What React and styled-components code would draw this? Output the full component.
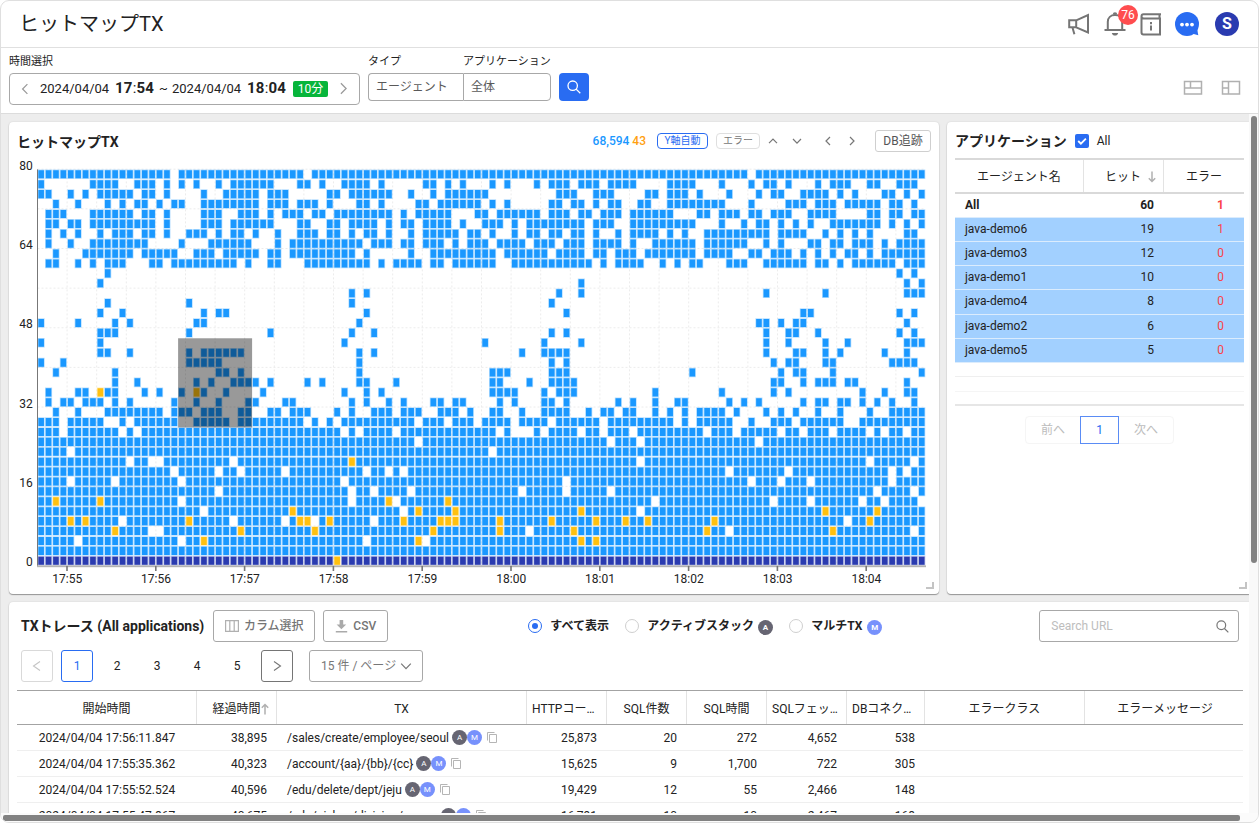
import React from "react";
import styled, { createGlobalStyle, css } from "styled-components";

const GlobalStyle = createGlobalStyle`
  * { box-sizing: border-box; }
  body {
    margin: 0;
    background: #fff;
    color: #222;
    font-family: Roboto, "Noto Sans CJK JP", sans-serif;
    font-size: 12px;
    line-height: 1;
    overflow: hidden;
  }
  button { font: inherit; color: inherit; padding: 0; }
`;

/* ---------- heatmap data ---------- */

const COLS = 120;
const ROWS = 40;

/* Filled columns per row, top (80s) to bottom */
const filled = [
  "0-17,19-35,37-95,97-119",
  "0,7-10,13-15,17,19,21,24,26-31,35-36,38,41-44,46,52-53,55,57,61,63,67,69-71,73-75,77-80,85-88,92,96,98-99,101,105,107-109,112-113,116-118",
  "0-1,4,6,8-12,14-15,17,22,25-29,31-33,39-40,42-47,50,53,55-60,70-72,75-77,82-83,85-87,89,93,97,99-100,103-106,108,110,114-115,117,119",
  "2,5,9,11,13-14,16,18-19,22-29,31-33,35-37,39,43-44,46,51-52,54-59,61,63,69-70,72-73,75,77-78,81-82,85-92,96,101-103,105-107,109-113,115-116,118",
  "1-3,7-12,14-15,17,22-24,27-29,31,33-35,37-38,40-47,49,51-55,59-60,62-67,69-71,73-74,76-78,80-85,89-90,92-94,96-97,99-101,104-107,112-113,115-116,118-119",
  "1-2,4-5,7-15,17,22-24,26-31,35-36,39-40,42-45,47,49-50,52-55,57,60-62,64,66-73,75-77,80-88,92,95,97-98,100,102,104,107-113,115,117,119",
  "1,3,5,8,10-12,14-15,17,20-22,24,26-27,29,32,35-37,39-40,42,44-45,47,50,52-56,58-59,61,64,66-67,69-70,72-73,75,78,80-83,85,87,90-98,100-103,106,108,110,112,117-118",
  "1,4,7-14,19,23-28,32,34-43,45-47,49-50,52-54,56,58-60,62-65,67-69,71-73,75-78,80,83-88,90-95,98,100,104-105,107-108,110-112,114,116-119",
  "2,6-12,14-18,21-23,25-29,31-32,34-42,44,50,53-61,63-68,70-73,75-76,78-80,82-88,90-93,96-97,99-101,103,105,107,109-110,112,114-119",
  "1-2,5,7,9-11,15-16,18-26,28,31-32,36-44,46,48-51,53-54,56-61,64-74,76,78-81,84,86,88-89,93-95,98-103,105-106,108,110-115,117-119",
  "9,116,118",
  "8,73,117,119",
  "42,44,70,73,98,106,117-119",
  "9,20,42,69",
  "8,11,22,24-25,44,71,103-104,116,118",
  "0,5,10,12,21-22,43,97-98,100,102-103,117",
  "8-10,20,31,42,45,69,71,98,101-102,105,116,118",
  "0,8,41,60,68,73,98,101,106,109,117-119",
  "8-9,12,20,22-27,43,45,65,68-71,98,102-103,106,108,114,117",
  "0,3,20-24,43,69,71,99,101-102,106-107,115-118",
  "2,10,24-25,27,43,61-63,69-71,88,100,102-103,107,119",
  "10,13,21,23,26-29,31,36,38,43-44,48,61-62,66,69-72,99-100,103,105-107,109-110,117",
  "1,5-6,9-10,14,16,19,22,25,30,41,44,46,61-64,68,70-72,83,92,99,101,111,114,117-118",
  "1,3-4,6-8,10,12,18,21,24,28-29,33-34,42,44,47,49,53-54,56-57,62,64,68-69,71,78,80,83,86-87,93,95,97,103,105-106,108-109,111,113,115,118",
  "2,5,9-16,18-20,22-24,27-28,31-32,34-36,40,42,45-47,49-51,54-56,58,61-62,65,68-71,74,76-77,79-80,83,85,87,89-92,94,98,100,102,105,108,112,115-119",
  "0-2,4-8,11,13-18,21-25,27-35,37,39,41-50,52-54,56-58,60-63,65-68,70-75,77-85,87,89-93,96,99-101,103-108,111-119",
  "0-2,4-10,12,14-40,42,44-47,49-61,63,67,69-72,74-75,77-79,81-89,91-93,95-99,101-102,104-106,108-111,113,115-116,118-119",
];

/* Lower rows are nearly solid, so only their holes are listed */
const holes = {
  27: [51, 77, 81, 97],
  28: [4, 61],
  29: [12, 15, 16, 26, 81, 112, 118],
  30: [18, 24, 27, 33, 44, 47, 49, 93, 101, 115, 117],
  31: [4, 10, 19, 41, 71, 96, 100, 104, 115],
  32: [24, 42, 45, 50, 65, 71, 77, 113, 118],
  33: [19, 42, 48, 83, 99, 104, 111, 114, 119],
  34: [22, 49, 81],
  35: [11, 26, 33, 37, 45, 109],
  36: [15, 16, 66, 93, 118],
  37: [5, 19, 44, 52],
  38: [],
  39: [],
};

const errors = {
  22: [8, 21],
  29: [42],
  33: [2, 8, 47, 55],
  34: [34, 51, 56, 73, 106, 113],
  35: [4, 6, 20, 35, 36, 39, 49, 54, 55, 56, 62, 69, 75, 79, 82, 91, 112],
  36: [10, 27, 37, 53, 62, 72, 90, 107],
  37: [22, 51, 73, 75],
  39: [40],
};

const expand = (text) =>
  text.split(",").flatMap((part) => {
    const [a, b = a] = part.split("-").map(Number);
    return Array.from({ length: b - a + 1 }, (_, i) => a + i);
  });

const buildCells = () => {
  const cells = { hit: [], base: [], error: [] };
  for (let r = 0; r < ROWS; r++) {
    const err = errors[r] || [];
    const on = filled[r]
      ? expand(filled[r])
      : Array.from({ length: COLS }, (_, i) => i).filter((c) => !holes[r].includes(c));
    on.filter((c) => !err.includes(c)).forEach((c) => cells[r === 39 ? "base" : "hit"].push([c, r]));
    err.forEach((c) => cells.error.push([c, r]));
  }
  return cells;
};

const CELLS = buildCells();
const PX = 28.5; // plot left inside the svg
const PY = 13.4; // plot top inside the svg
const CW = 7.4;
const CH = 9.91;

const cellPath = (list, inset) =>
  list
    .map(([c, r]) => {
      const x = (PX + c * CW + inset).toFixed(2);
      const y = (PY + r * CH + inset).toFixed(2);
      const w = (CW - inset * 2 - 0.1).toFixed(2);
      const h = (CH - inset * 2 - 0.1).toFixed(2);
      return `M${x} ${y}h${w}v${h}h-${w}z`;
    })
    .join("");

const PLOT_W = COLS * CW;
const PLOT_H = ROWS * CH;

const Chart = styled.svg`
  display: block;
  font-family: Roboto, sans-serif;
  font-size: 12px;
  fill: #222;
`;

const LAYERS = [
  ["hit", "#1a98ff"],
  ["base", "#2a3bb0"],
  ["error", "#ffc010"],
];

function Heatmap() {
  const times = ["17:55", "17:56", "17:57", "17:58", "17:59", "18:00", "18:01", "18:02", "18:03", "18:04"];
  const bottom = 410;
  return (
    <Chart width="930" height="438" viewBox="0 0 930 438">
      <g stroke="#ececec" strokeDasharray="2 2">
        {Array.from({ length: 10 }, (_, i) => (
          <line key={i} x1={PX} x2={PX + PLOT_W} y1={PY + i * CH * 4 - 0.2} y2={PY + i * CH * 4 - 0.2} />
        ))}
        {Array.from({ length: 29 }, (_, i) => (
          <line key={i} x1={PX + 29.6 + i * 29.6} x2={PX + 29.6 + i * 29.6} y1={PY} y2={bottom} />
        ))}
      </g>
      {LAYERS.map(([key, color]) => (
        <g key={key} fill={color}>
          <path d={cellPath(CELLS[key], 0.1)} opacity="0.32" />
          <path d={cellPath(CELLS[key], 0.85)} />
        </g>
      ))}
      <rect x={PX + 19 * CW} y={PY + 17 * CH + 0.4} width={CW * 10} height={CH * 9} fill="#000" fillOpacity="0.4" />
      <rect x="28" y={PY} width="1" height={PLOT_H + 1} fill="#777" />
      <rect x="28" y={bottom - 0.6} width={PLOT_W + 1} height="1.8" fill="#b3b3b3" />
      {times.map((t, i) => (
        <g key={t}>
          <rect x={57.2 + i * 88.8} y={bottom} width="1.6" height="5" fill="#777" />
          <text x={58.2 + i * 88.8} y="427" textAnchor="middle">{t}</text>
        </g>
      ))}
      {[80, 64, 48, 32, 16, 0].map((v, i) => (
        <text key={v} x="23.7" y={Math.round(13.7 + i * CH * 8)} textAnchor="end">{v}</text>
      ))}
    </Chart>
  );
}

/* ---------- frame ---------- */

const Frame = styled.div`
  width: 1259px;
  height: 823px;
  border: 1px solid #dfdfdf;
  border-radius: 9px;
  overflow: hidden;
  display: flex;
  flex-direction: column;
`;

const Header = styled.header`
  flex: none;
  height: 47px;
  border-bottom: 1px solid #e0e0e0;
  padding: 0 19px 0 18px;
  display: flex;
  align-items: center;
  justify-content: space-between;
`;

const PageTitle = styled.h1`
  margin: 0;
  font-size: 20px;
  font-weight: 400;
`;

const HeaderIcons = styled.div`
  display: flex;
  align-items: center;
  gap: 12px;
`;

const IconSlot = styled.span`
  position: relative;
  width: 24px;
  height: 24px;
  display: block;
  svg { display: block; }
`;

const CountBadge = styled.span`
  position: absolute;
  left: 15px;
  top: -7px;
  width: 20px;
  height: 20px;
  border-radius: 10px;
  background: #ff4d4f;
  color: #fff;
  font-size: 12px;
  line-height: 20px;
  text-align: center;
`;

const Avatar = styled.span`
  width: 24px;
  height: 24px;
  margin-left: 4px;
  border-radius: 50%;
  background: #2a3bb0;
  color: #fff;
  font-size: 16px;
  font-weight: 700;
  line-height: 24px;
  text-align: center;
`;

const Toolbar = styled.div`
  flex: none;
  height: 66px;
  border-bottom: 1px solid #dcdcdc;
  padding: 7px 17px 0 8px;
  display: flex;
  align-items: flex-start;
`;

const Field = styled.div`
  display: flex;
  flex-direction: column;
  margin-right: ${(p) => p.$mr || 0}px;
`;

const FieldLabel = styled.label`
  height: 18px;
  font-size: 11px;
  line-height: 14px;
  white-space: nowrap;
`;

const TimeBox = styled.div`
  width: 351px;
  height: 32px;
  border: 1px solid #a8a8a8;
  border-radius: 4px;
  display: flex;
  align-items: center;
  padding: 0 9px 1px;
  font-size: 13px;
`;

const TimeText = styled.span`
  flex: none;
  width: ${(p) => p.$w}px;
  white-space: pre;
  svg { display: block; }
  ${(p) => p.$bold && css`
    font-size: 15px;
    font-weight: 700;
    letter-spacing: 0.2px;
    i { font-style: normal; font-weight: 400; }
  `}
`;

const Duration = styled.span`
  width: 35px;
  height: 16px;
  margin-right: 9px;
  border-radius: 2px;
  background: #07b53b;
  color: #fff;
  font-size: 12px;
  line-height: 16px;
  text-align: center;
`;

const SelectBox = styled.div`
  width: ${(p) => p.$w}px;
  height: 28px;
  border: 1px solid #a8a8a8;
  border-radius: ${(p) => (p.$left ? "4px 0 0 4px" : "0 4px 4px 0")};
  border-right-width: ${(p) => (p.$left ? 0 : 1)}px;
  padding-left: 7px;
  line-height: 26px;
  color: #595959;
`;

const SearchButton = styled.button`
  width: 30px;
  height: 28px;
  margin: 18px 0 0 8px;
  border: 0;
  border-radius: 4px;
  background: #296cf2;
  color: #fff;
  display: grid;
  place-items: center;
`;

const LayoutIcons = styled.div`
  margin: 25px 0 0 auto;
  display: flex;
  gap: 18px;
  svg { display: block; }
`;

/* ---------- body ---------- */

const Body = styled.main`
  flex: 1;
  min-height: 0;
  display: grid;
  grid-template-columns: 1fr 9px;
  grid-template-rows: 1fr 9px;
  background: #ededed;
`;

const Board = styled.div`
  overflow: hidden;
  padding: 8px 0 0 8px;
`;

const TopRow = styled.div`
  display: flex;
  gap: 8px;
  width: 1243px;
  margin-bottom: 8px;
`;

const Card = styled.section`
  position: relative;
  flex: none;
  width: ${(p) => p.$w}px;
  height: ${(p) => p.$h}px;
  border-radius: 4px;
  background: #fff;
  box-shadow: 0 1px 1px rgba(0, 0, 0, 0.35), 0 0 2px rgba(0, 0, 0, 0.12);
`;

const ResizeMark = styled.i`
  position: absolute;
  right: ${(p) => p.$r}px;
  bottom: 5px;
  width: 8px;
  height: 7px;
  border: solid #c4c4c4;
  border-width: 0 2px 2px 0;
`;

const VTrack = styled.div`
  background: #f9f9f9;
  padding: 2px 0 0 2px;
  &::before {
    content: "";
    display: block;
    width: 6px;
    height: 447px;
    border-radius: 3px;
    background: #828282;
  }
`;

const HTrack = styled.div`
  grid-column: 1 / 3;
  background: #fbfbfb;
  padding: 2px 0 0 2px;
  &::before {
    content: "";
    display: block;
    width: 1237px;
    height: 6px;
    border-radius: 2px;
    background: #828282;
  }
`;

const CardTitle = styled.h2`
  margin: 0;
  font-size: 14px;
  font-weight: 700;
  white-space: nowrap;
`;

const ChartHeader = styled.div`
  height: 34px;
  padding: 4px 8px 0 8px;
  display: flex;
  align-items: center;
  ${CardTitle} { padding-top: 1px; }
`;

const Totals = styled.span`
  margin-left: auto;
  margin-right: 11px;
  font-weight: 500;
  color: #1a98ff;
  b { font-weight: 500; color: #ff9f10; }
`;

const Tag = styled.button`
  width: ${(p) => p.$w}px;
  height: 16px;
  margin-right: 8px;
  border: 1px solid ${(p) => (p.$active ? "#296cf2" : "#dfdfdf")};
  border-radius: 4px;
  background: #fff;
  color: ${(p) => (p.$active ? "#296cf2" : "#777")};
  font-size: 10px;
  line-height: 14px;
`;

const Chevron = styled.span`
  width: 10px;
  height: 10px;
  margin-right: ${(p) => p.$mr}px;
  svg { display: block; }
`;

const DbButton = styled.button`
  width: 56px;
  height: 22px;
  border: 1px solid #cfcfcf;
  border-radius: 3px;
  background: #fff;
  color: #555;
  font-size: 12px;
  line-height: 19px;
`;

/* ---------- application panel ---------- */

const AppHeader = styled.div`
  height: 36px;
  padding: 2px 0 0 8px;
  display: flex;
  align-items: center;
`;

const CheckBox = styled.span`
  width: 14px;
  height: 14px;
  margin: 0 8px 0 8px;
  border-radius: 2px;
  background: #296cf2;
  svg { display: block; }
`;

const AppTable = styled.div`
  width: 289px;
  margin-left: 8px;
`;

const appCols = css`
  display: grid;
  grid-template-columns: 129px 80px 80px;
  align-items: center;
`;

const AppHead = styled.div`
  ${appCols}
  height: 36px;
  border-top: 2px solid #d9d9d9;
  border-bottom: 2px solid #d9d9d9;
`;

const AppTh = styled.span`
  height: 32px;
  display: flex;
  align-items: center;
  justify-content: center;
  gap: 7px;
  padding: 2px 0 0 ${(p) => p.$pl || 0}px;
  border-right: ${(p) => (p.$last ? 0 : 1)}px solid #e3e3e3;
`;

const AppRow = styled.div`
  ${appCols}
  height: ${(p) => (p.$total ? 24 : 24.15)}px;
  padding-bottom: 1px;
  font-weight: ${(p) => (p.$total ? 700 : 400)};
  background: ${(p) => (p.$total ? "#fff" : "#a2d0ff")};
  border-bottom: 1px solid #dbecfd;
  span:nth-child(1) { padding-left: 10px; }
  span:nth-child(2) { padding-right: 10px; text-align: right; }
  span:nth-child(3) { padding-right: 20px; text-align: right; color: #fb4347; }
`;

const EmptyRow = styled.div`
  height: ${(p) => p.$h}px;
  border-bottom: ${(p) => p.$b || 1}px solid ${(p) => p.$c};
`;

const Pager = styled.div`
  width: 149px;
  height: 28px;
  margin: 10px 0 0 78px;
  border: 1px solid #f5f5f5;
  border-radius: 4px;
  display: flex;
  align-items: center;
  color: #bcbcbc;
`;

const PagerItem = styled.span`
  width: ${(p) => p.$w}px;
  height: 28px;
  line-height: 28px;
  text-align: center;
  ${(p) => p.$active && css`
    border: 1px solid #5a8cf5;
    line-height: 26px;
    color: #296cf2;
  `}
`;

/* ---------- trace panel ---------- */

const TraceHeader = styled.div`
  height: 48px;
  padding: 0 0 0 12px;
  display: flex;
  align-items: center;
`;

const ToolButton = styled.button`
  width: ${(p) => p.$w}px;
  height: 32px;
  margin-left: ${(p) => p.$ml}px;
  border: 1px solid #a8a8a8;
  border-radius: 3px;
  background: #fff;
  color: #757575;
  font-weight: 500;
  display: flex;
  align-items: center;
  justify-content: center;
  gap: 5px;
`;

const RadioLabel = styled.label`
  width: ${(p) => p.$w}px;
  margin-left: ${(p) => p.$ml || 0}px;
  font-weight: 700;
  display: flex;
  align-items: center;
  white-space: nowrap;
`;

const Radio = styled.i`
  width: 14px;
  height: 14px;
  margin-right: 8px;
  border: 1px solid ${(p) => (p.$on ? "#296cf2" : "#cfcfcf")};
  border-radius: 50%;
  display: grid;
  place-items: center;
  &::after {
    content: "";
    width: 6px;
    height: 6px;
    border-radius: 50%;
    background: ${(p) => (p.$on ? "#296cf2" : "transparent")};
  }
`;

const Dot = styled.i`
  display: inline-block;
  width: 15px;
  height: 15px;
  border-radius: 50%;
  background: ${(p) => (p.$m ? "#7791fc" : "#666572")};
  color: #fff;
  font-size: 8px;
  font-style: normal;
  font-weight: ${(p) => (p.$bold ? 700 : 400)};
  line-height: 15px;
  text-align: center;
  margin: ${(p) => p.$margin || 0};
`;

const SearchField = styled.div`
  width: 200px;
  height: 32px;
  border: 1px solid #a8a8a8;
  border-radius: 3px;
  display: flex;
  align-items: center;
  justify-content: space-between;
  padding: 0 9px 0 11px;
  color: #bdbdbd;
`;

const PageRow = styled.div`
  display: flex;
  height: 32px;
  padding-left: 12px;
`;

const PageButton = styled.button`
  width: 32px;
  height: 32px;
  margin-right: 8px;
  padding-bottom: 1px;
  border: 1px solid ${(p) => p.$border || "transparent"};
  border-radius: 3px;
  background: #fff;
  color: ${(p) => p.$color || "#222"};
  display: grid;
  place-items: center;
  svg { margin-top: 1px; }
`;

const PageSize = styled.div`
  width: 114px;
  height: 32px;
  margin-left: 8px;
  border: 1px solid #a8a8a8;
  border-radius: 3px;
  color: #777;
  display: flex;
  align-items: center;
  padding-left: 11px;
  gap: 4px;
  white-space: pre;
`;

const TraceTable = styled.div`
  width: 1226px;
  margin: 8px 0 0 8px;
`;

const traceCols = css`
  display: grid;
  grid-template-columns: 180px 80px 250px 80px 80px 80px 80px 78px 160px 158px;
`;

const TraceHead = styled.div`
  ${traceCols}
  height: 35px;
  border-top: 1px solid #a3a3a3;
  border-bottom: 1px solid #a3a3a3;
`;

const Th = styled.span`
  display: flex;
  align-items: center;
  justify-content: ${(p) => (p.$left ? "flex-start" : "center")};
  padding: 2px 0 0 ${(p) => p.$pl || 0}px;
  border-right: ${(p) => (p.$last ? 0 : 1)}px solid #e3e3e3;
  white-space: nowrap;
`;

const TraceRow = styled.div`
  ${traceCols}
  height: 26px;
  border-bottom: 1px solid #efefef;
  align-items: center;
`;

const Td = styled.span`
  text-align: ${(p) => p.$align || "right"};
  padding-right: ${(p) => (p.$align ? 0 : 10)}px;
  white-space: nowrap;
`;

const TxCell = styled.span`
  display: flex;
  align-items: center;
  padding-left: 10px;
  white-space: nowrap;
  svg { margin-left: 5px; }
`;

/* ---------- icons ---------- */

const chevronPoints = {
  up: "1 7.2 5 3 9 7.2",
  down: "1 3 5 7.2 9 3",
  left: "7 1 3 5 7 9",
  right: "3 1 7 5 3 9",
};

const ChevronIcon = ({ dir, size = 10, w = 1.2, color = "currentColor" }) => (
  <svg width={size} height={size} viewBox="0 0 10 10" fill="none" stroke={color} strokeWidth={w}>
    <polyline points={chevronPoints[dir]} />
  </svg>
);

/* Wide-angled arrow used by the page buttons */
const PageArrow = ({ left }) => (
  <svg width="10" height="12" fill="none" stroke="currentColor" strokeWidth="1.1">
    <polyline points={left ? "8 1.5 1.5 6 8 10.500" : "2 1.500 8.500 6 2 10.500"} />
  </svg>
);

const Magnifier = ({ size = 14, color = "currentColor" }) => (
  <svg width={size} height={size} viewBox="0 0 14 14" fill="none" stroke={color} strokeWidth="1.3">
    <circle cx="5.7" cy="5.7" r="4.7" />
    <path d="M9.1 9.1l4.2 4.2" />
  </svg>
);

const Megaphone = () => (
  <svg width="24" height="24" fill="none" stroke="#757575" strokeWidth="2">
    <path d="M2.2 8.3h7v7h-7zM9.200 8.300L21 3v17.500L9.200 15.300M5.600 16l1.800 6.200" />
  </svg>
);

const Bell = () => (
  <svg width="24" height="24" fill="none" stroke="#757575" strokeWidth="2">
    <path d="M1.500 18h21M4.800 18V9.800C4.800 5.800 7.800 3 12 3s7.200 2.800 7.200 6.800V18" />
    <path d="M8.800 21h6.400c-.5 1.800-1.700 2.600-3.200 2.600s-2.700-.8-3.200-2.600z" fill="#757575" stroke="none" />
    <path d="M9.800 2.400a2.200 2.200 0 0 1 4.400 0z" fill="#757575" stroke="none" />
  </svg>
);

const Guide = () => (
  <svg width="24" height="24" fill="none" stroke="#757575" strokeWidth="2">
    <path d="M22 2.200H4.500Q2.500 2.200 2.500 4.200v16q0 2.200 2 2.200H21V6.500H5Q2.500 6.500 2.500 4.200M20.500 2v4.500" />
    <path d="M12 10v2.200M12 13.500v5" />
  </svg>
);

const Chat = () => (
  <svg width="26" height="26" fill="#296cf2">
    <circle cx="12" cy="12" r="12" />
    <path d="M15 21l7-5 1.300 7.300z" />
    <g fill="#fff">
      <circle cx="7" cy="12.600" r="1.900" />
      <circle cx="12" cy="12.600" r="1.900" />
      <circle cx="17" cy="12.600" r="1.900" />
    </g>
  </svg>
);

const ArrowIcon = ({ up }) => (
  <svg width="8" height="12" fill="none" stroke="#b0b0b0" strokeWidth="1.500">
    <path d={up ? "M4 11.500V1.500M.8 4.800L4 1.500l3.200 3.300" : "M4 .5v10M.8 7.200L4 10.500l3.200-3.300"} />
  </svg>
);

const CopyIcon = () => (
  <svg width="10" height="11" fill="none" stroke="#b5b5b5">
    <path d="M2.500 2.500h7v8h-7z" />
    <path d="M.5 8.500v-8h7" />
  </svg>
);

/* ---------- content ---------- */

const apps = [
  ["All", 60, 1],
  ["java-demo6", 19, 1],
  ["java-demo3", 12, 0],
  ["java-demo1", 10, 0],
  ["java-demo4", 8, 0],
  ["java-demo2", 6, 0],
  ["java-demo5", 5, 0],
];

const traces = [
  ["2024/04/04 17:56:11.847", "38,895", "/sales/create/employee/seoul", "25,873", "20", "272", "4,652", "538"],
  ["2024/04/04 17:55:35.362", "40,323", "/account/{aa}/{bb}/{cc}", "15,625", "9", "1,700", "722", "305"],
  ["2024/04/04 17:55:52.524", "40,596", "/edu/delete/dept/jeju", "19,429", "12", "55", "2,466", "148"],
  ["2024/04/04 17:55:47.867", "40,675", "/edu/pickup/division/suwon", "16,791", "10", "10", "2,467", "168"],
];

export default function App() {
  return (
    <Frame>
      <GlobalStyle />
      <Header>
        <PageTitle>ヒットマップTX</PageTitle>
        <HeaderIcons>
          <IconSlot><Megaphone /></IconSlot>
          <IconSlot><Bell /><CountBadge>76</CountBadge></IconSlot>
          <IconSlot><Guide /></IconSlot>
          <IconSlot><Chat /></IconSlot>
          <Avatar>S</Avatar>
        </HeaderIcons>
      </Header>

      <Toolbar>
        <Field $mr={8}>
          <FieldLabel>時間選択</FieldLabel>
          <TimeBox>
            <TimeText $w={21}><ChevronIcon dir="left" size={12} w={1} color="#999" /></TimeText>
            <TimeText $w={75}>2024/04/04</TimeText>
            <TimeText $w={44} $bold>17<i>:</i>54</TimeText>
            <TimeText $w={13}>~</TimeText>
            <TimeText $w={75}>2024/04/04</TimeText>
            <TimeText $w={46} $bold>18<i>:</i>04</TimeText>
            <Duration>10分</Duration>
            <ChevronIcon dir="right" size={13} w={0.95} color="#999" />
          </TimeBox>
        </Field>
        <Field>
          <FieldLabel>タイプ</FieldLabel>
          <SelectBox $w={95} $left>エージェント</SelectBox>
        </Field>
        <Field>
          <FieldLabel>アプリケーション</FieldLabel>
          <SelectBox $w={88}>全体</SelectBox>
        </Field>
        <SearchButton><Magnifier /></SearchButton>
        <LayoutIcons>
          <svg width="20" height="16" fill="none" stroke="#b0b0b0" strokeWidth="1.500">
            <path d="M1.500 1.500h17v12.500h-17zM1.500 8h17M7.500 1.500V8" />
          </svg>
          <svg width="20" height="16" fill="none" stroke="#b0b0b0" strokeWidth="1.500">
            <path d="M1.500 1.500h17v12.500h-17zM7.500 1.500v12.500M1.500 8h6" />
          </svg>
        </LayoutIcons>
      </Toolbar>

      <Body>
        <Board>
          <TopRow>
            <Card $w={930} $h={472}>
              <ChartHeader>
                <CardTitle>ヒットマップTX</CardTitle>
                <Totals>68,594 <b>43</b></Totals>
                <Tag $w={51} $active>Y軸自動</Tag>
                <Tag $w={44}>エラー</Tag>
                <Chevron $mr={14}><ChevronIcon dir="up" color="#777" /></Chevron>
                <Chevron $mr={21}><ChevronIcon dir="down" color="#777" /></Chevron>
                <Chevron $mr={14}><ChevronIcon dir="left" color="#777" /></Chevron>
                <Chevron $mr={18}><ChevronIcon dir="right" color="#777" /></Chevron>
                <DbButton>DB追跡</DbButton>
              </ChartHeader>
              <Heatmap />
              <ResizeMark $r={5} />
            </Card>

            <Card $w={305} $h={472}>
              <AppHeader>
                <CardTitle>アプリケーション</CardTitle>
                <CheckBox>
                  <svg width="14" height="14" fill="none" stroke="#fff" strokeWidth="1.800">
                    <path d="M3.200 7l2.700 2.700 5-5" />
                  </svg>
                </CheckBox>
                All
              </AppHeader>
              <AppTable>
                <AppHead>
                  <AppTh>エージェント名</AppTh>
                  <AppTh $pl={14}>ヒット<ArrowIcon /></AppTh>
                  <AppTh $last>エラー</AppTh>
                </AppHead>
                {apps.map(([name, hit, err], i) => (
                  <AppRow key={name} $total={i === 0}>
                    <span>{name}</span>
                    <span>{hit}</span>
                    <span>{err}</span>
                  </AppRow>
                ))}
                <EmptyRow $h={14} $c="#efefef" />
                <EmptyRow $h={15} $c="#f5f5f5" />
                <EmptyRow $h={14} $c="#e6e6e6" $b={2} />
              </AppTable>
              <Pager>
                <PagerItem $w={54}>前へ</PagerItem>
                <PagerItem $w={39} $active>1</PagerItem>
                <PagerItem $w={54}>次へ</PagerItem>
              </Pager>
              <ResizeMark $r={5} />
            </Card>
          </TopRow>

          <Card $w={1244} $h={300}>
            <TraceHeader>
              <CardTitle>TXトレース (All applications)</CardTitle>
              <ToolButton $w={102} $ml={9}>
                <svg width="14" height="12" fill="none" stroke="#b0b0b0" strokeWidth="1.200">
                  <path d="M.6.6h12.800v10.800H.6zM4.800.6v10.800M9.200.6v10.800" />
                </svg>
                カラム選択
              </ToolButton>
              <ToolButton $w={65} $ml={8}>
                <svg width="13" height="13" fill="#aaa">
                  <path d="M4.600 0h3.600v4.500h3L6.400 9.200 1.600 4.500h3zM.8 11h11.400v1.600H.8z" />
                </svg>
                CSV
              </ToolButton>
              <RadioLabel $w={97} $ml={140}>
                <Radio $on />すべて表示
              </RadioLabel>
              <RadioLabel $w={164}>
                <Radio />アクティブスタック<Dot $bold $margin="2px 0 0 4px">A</Dot>
              </RadioLabel>
              <RadioLabel $w={250}>
                <Radio />マルチTX<Dot $m $bold $margin="2px 0 0 5px">M</Dot>
              </RadioLabel>
              <SearchField>
                Search URL
                <Magnifier size={13} color="#777" />
              </SearchField>
            </TraceHeader>
            <PageRow>
              <PageButton $border="#d9d9d9" $color="#c4c4c4"><PageArrow left /></PageButton>
              <PageButton $border="#296cf2" $color="#296cf2">1</PageButton>
              <PageButton>2</PageButton>
              <PageButton>3</PageButton>
              <PageButton>4</PageButton>
              <PageButton>5</PageButton>
              <PageButton $border="#757575" $color="#757575"><PageArrow /></PageButton>
              <PageSize>15 件 / ページ<ChevronIcon dir="down" size={12} w={1} /></PageSize>
            </PageRow>
            <TraceTable>
              <TraceHead>
                <Th>開始時間</Th>
                <Th $pl={8}>経過時間<ArrowIcon up /></Th>
                <Th>TX</Th>
                <Th $left $pl={5}>HTTPコー…</Th>
                <Th>SQL件数</Th>
                <Th>SQL時間</Th>
                <Th $left $pl={5}>SQLフェッ…</Th>
                <Th $left $pl={5}>DBコネク…</Th>
                <Th>エラークラス</Th>
                <Th $last $pl={2}>エラーメッセージ</Th>
              </TraceHead>
              {traces.map(([start, elapsed, url, ...nums]) => (
                <TraceRow key={start}>
                  <Td $align="center">{start}</Td>
                  <Td>{elapsed}</Td>
                  <TxCell>
                    {url}
                    <Dot $margin="0 0 0 3px">A</Dot>
                    <Dot $m>M</Dot>
                    <CopyIcon />
                  </TxCell>
                  {nums.map((n, i) => (
                    <Td key={i}>{n}</Td>
                  ))}
                </TraceRow>
              ))}
            </TraceTable>
          </Card>
        </Board>
        <VTrack />
        <HTrack />
      </Body>
    </Frame>
  );
}
